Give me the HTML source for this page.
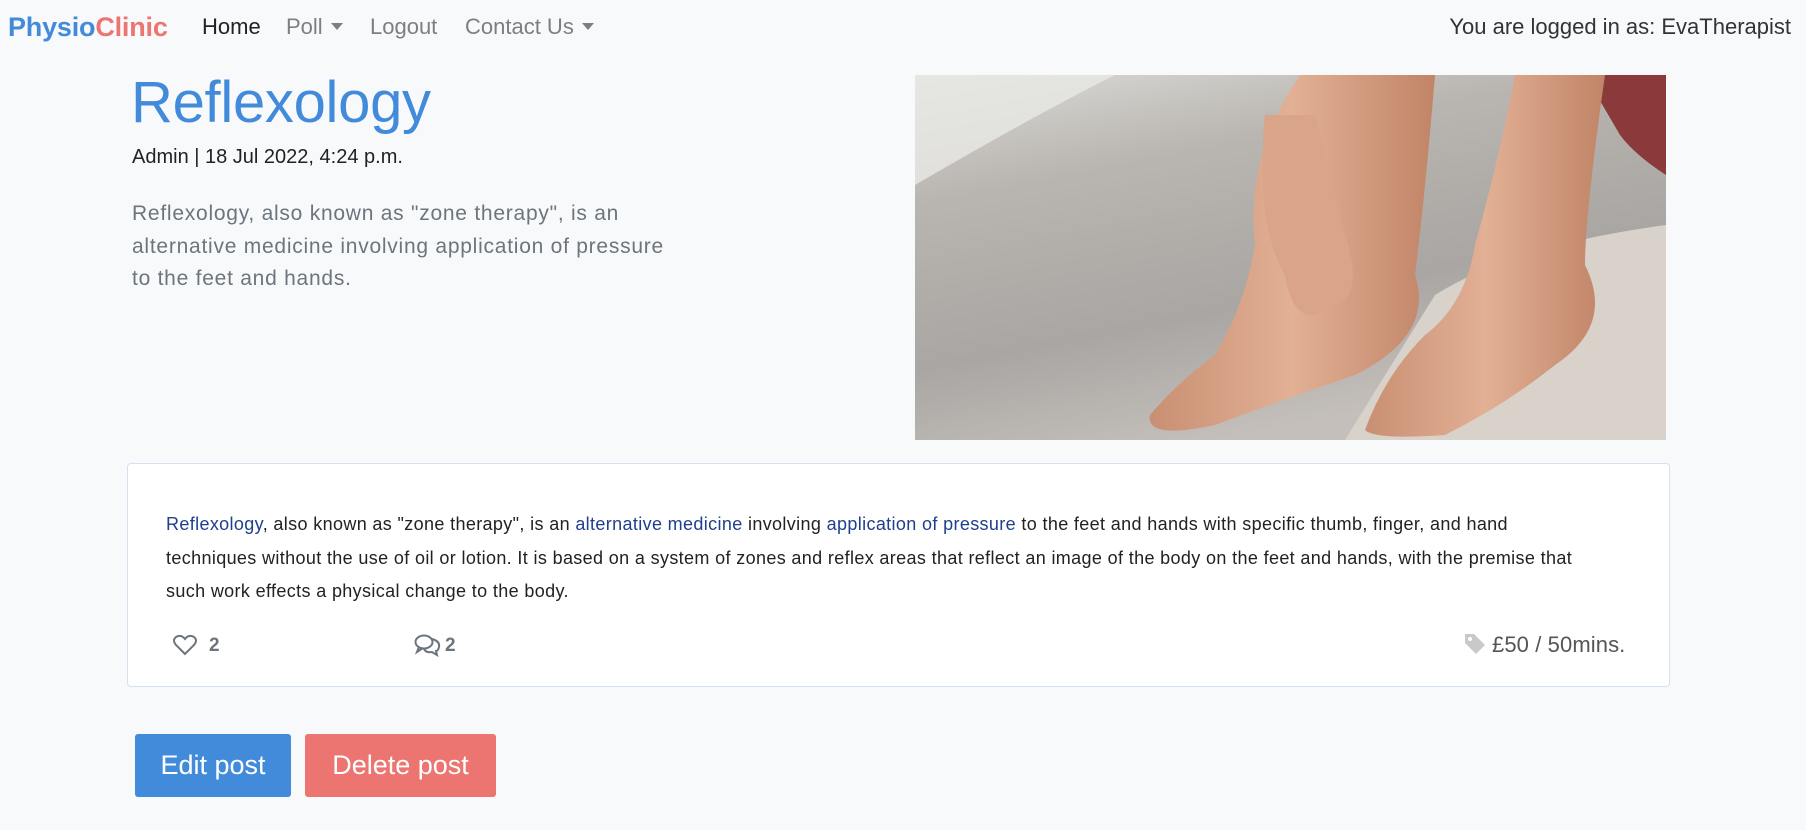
<!DOCTYPE html>
<html><head><meta charset="utf-8">
<style>
*{margin:0;padding:0;box-sizing:border-box}
body{width:1806px;height:830px;background:#f8f9fa;font-family:"Liberation Sans",Arial,sans-serif;position:relative;overflow:hidden}
.a{position:absolute;white-space:nowrap}
.nav{font-size:22px;color:#7b7f84;top:14px}
a{color:#1f3f8c;text-decoration:none}
.caret{display:inline-block;width:0;height:0;border-left:6px solid transparent;border-right:6px solid transparent;border-top:7px solid #7b7f84;vertical-align:4px;margin-left:8px}
</style></head><body>
<div class="a" style="left:8px;top:12px;font-size:27px;font-weight:bold;letter-spacing:-0.2px"><span style="color:#428bdb">Physio</span><span style="color:#ec7471">Clinic</span></div>
<div class="a nav" style="left:202px;color:#222">Home</div>
<div class="a nav" style="left:286px">Poll<span class="caret"></span></div>
<div class="a nav" style="left:370px">Logout</div>
<div class="a nav" style="left:465px">Contact Us<span class="caret"></span></div>
<div class="a nav" style="right:15px;color:#333">You are logged in as: EvaTherapist</div>

<div class="a" style="left:131px;top:69px;font-size:58px;color:#428bdb;letter-spacing:-0.3px">Reflexology</div>
<div class="a" style="left:132px;top:146px;font-size:20px;color:#222">Admin | 18 Jul 2022, 4:24 p.m.</div>
<div class="a" style="left:132px;top:198px;font-size:21px;line-height:32.5px;color:#6c757d;letter-spacing:0.75px">Reflexology, also known as "zone therapy", is an<br>alternative medicine involving application of pressure<br>to the feet and hands.</div>

<svg class="a" style="left:915px;top:75px" width="751" height="365" viewBox="0 0 751 365">
<defs>
<linearGradient id="bg" x1="0" y1="0" x2="0.4" y2="1"><stop offset="0" stop-color="#dcdcd8"/><stop offset="0.3" stop-color="#b9b5b0"/><stop offset="0.7" stop-color="#a9a6a3"/><stop offset="1" stop-color="#c4bfba"/></linearGradient>
<linearGradient id="sk" x1="0" y1="0" x2="1" y2="0"><stop offset="0" stop-color="#c98f72"/><stop offset="0.5" stop-color="#e2b095"/><stop offset="1" stop-color="#c18467"/></linearGradient>
</defs>
<rect width="751" height="365" fill="url(#bg)"/>
<path d="M0 0 H200 Q120 40 0 110Z" fill="#e8e8e6" opacity="0.8"/>
<path d="M751 150 L751 365 L430 365 Q470 300 520 220 Q600 170 751 150Z" fill="#d8d2ca"/>
<path d="M670 0 H751 V100 Q720 80 705 60Z" fill="#8a3a3a"/>
<path d="M385 0 L520 0 Q510 120 500 200 Q520 260 440 300 Q380 320 300 350 Q230 365 235 340 Q260 310 300 280 Q330 230 340 170 Q330 80 385 0Z" fill="url(#sk)"/>
<path d="M600 0 H690 Q670 140 670 190 Q700 250 640 290 Q590 330 530 360 Q460 365 450 355 Q470 300 510 260 Q550 230 560 170 Q585 80 600 0Z" fill="url(#sk)"/>
<path d="M350 40 L400 40 Q420 120 430 160 Q450 220 420 230 Q380 260 370 200 Q340 150 350 40Z" fill="#d9a488"/>
</svg>

<div class="a" style="left:127px;top:463px;width:1543px;height:224px;background:#fff;border:1px solid #d3e2ee;border-radius:4px"></div>
<div class="a" style="left:166px;top:508px;font-size:18px;line-height:33.5px;color:#222;letter-spacing:0.36px"><a>Reflexology</a>, also known as "zone therapy", is an <a>alternative medicine</a> involving <a>application of pressure</a> to the feet and hands with specific thumb, finger, and hand<br>techniques without the use of oil or lotion. It is based on a system of zones and reflex areas that reflect an image of the body on the feet and hands, with the premise that<br>such work effects a physical change to the body.</div>

<svg class="a" style="left:173px;top:634px" width="24" height="22" viewBox="0 0 24 22"><path d="M12 20 L3 11 Q-1 6 3 3 Q8 0 12 5 Q16 0 21 3 Q25 6 21 11Z" fill="none" stroke="#6c757d" stroke-width="2"/></svg>
<div class="a" style="left:209px;top:635px;font-size:19px;font-weight:bold;color:#6c757d">2</div>
<svg class="a" style="left:414px;top:633px" width="28" height="24" viewBox="0 0 28 24"><ellipse cx="10" cy="9" rx="8.5" ry="6.5" fill="none" stroke="#6c757d" stroke-width="2"/><path d="M5 14 L3 19 L9 15" fill="none" stroke="#6c757d" stroke-width="2"/><path d="M18 6 Q26 8 25 14 Q24 18 22 18 L23 22 L18 19 Q12 20 10 16" fill="none" stroke="#6c757d" stroke-width="2"/></svg>
<div class="a" style="left:445px;top:635px;font-size:19px;font-weight:bold;color:#6c757d">2</div>
<svg class="a" style="left:1464px;top:633px" width="22" height="22" viewBox="0 0 22 22"><path d="M1 1 H10 L21 12 L12 21 L1 10Z" fill="#c9c9c9"/><circle cx="6" cy="6" r="2" fill="#fff"/></svg>
<div class="a" style="left:1492px;top:632px;font-size:22px;color:#555;letter-spacing:0.1px">£50 / 50mins.</div>

<div class="a" style="left:135px;top:734px;width:156px;height:63px;background:#428bdb;border-radius:3px;color:#fff;font-size:27px;line-height:63px;text-align:center">Edit post</div>
<div class="a" style="left:305px;top:734px;width:191px;height:63px;background:#ec7471;border-radius:3px;color:#fff;font-size:27px;line-height:63px;text-align:center">Delete post</div>
</body></html>
